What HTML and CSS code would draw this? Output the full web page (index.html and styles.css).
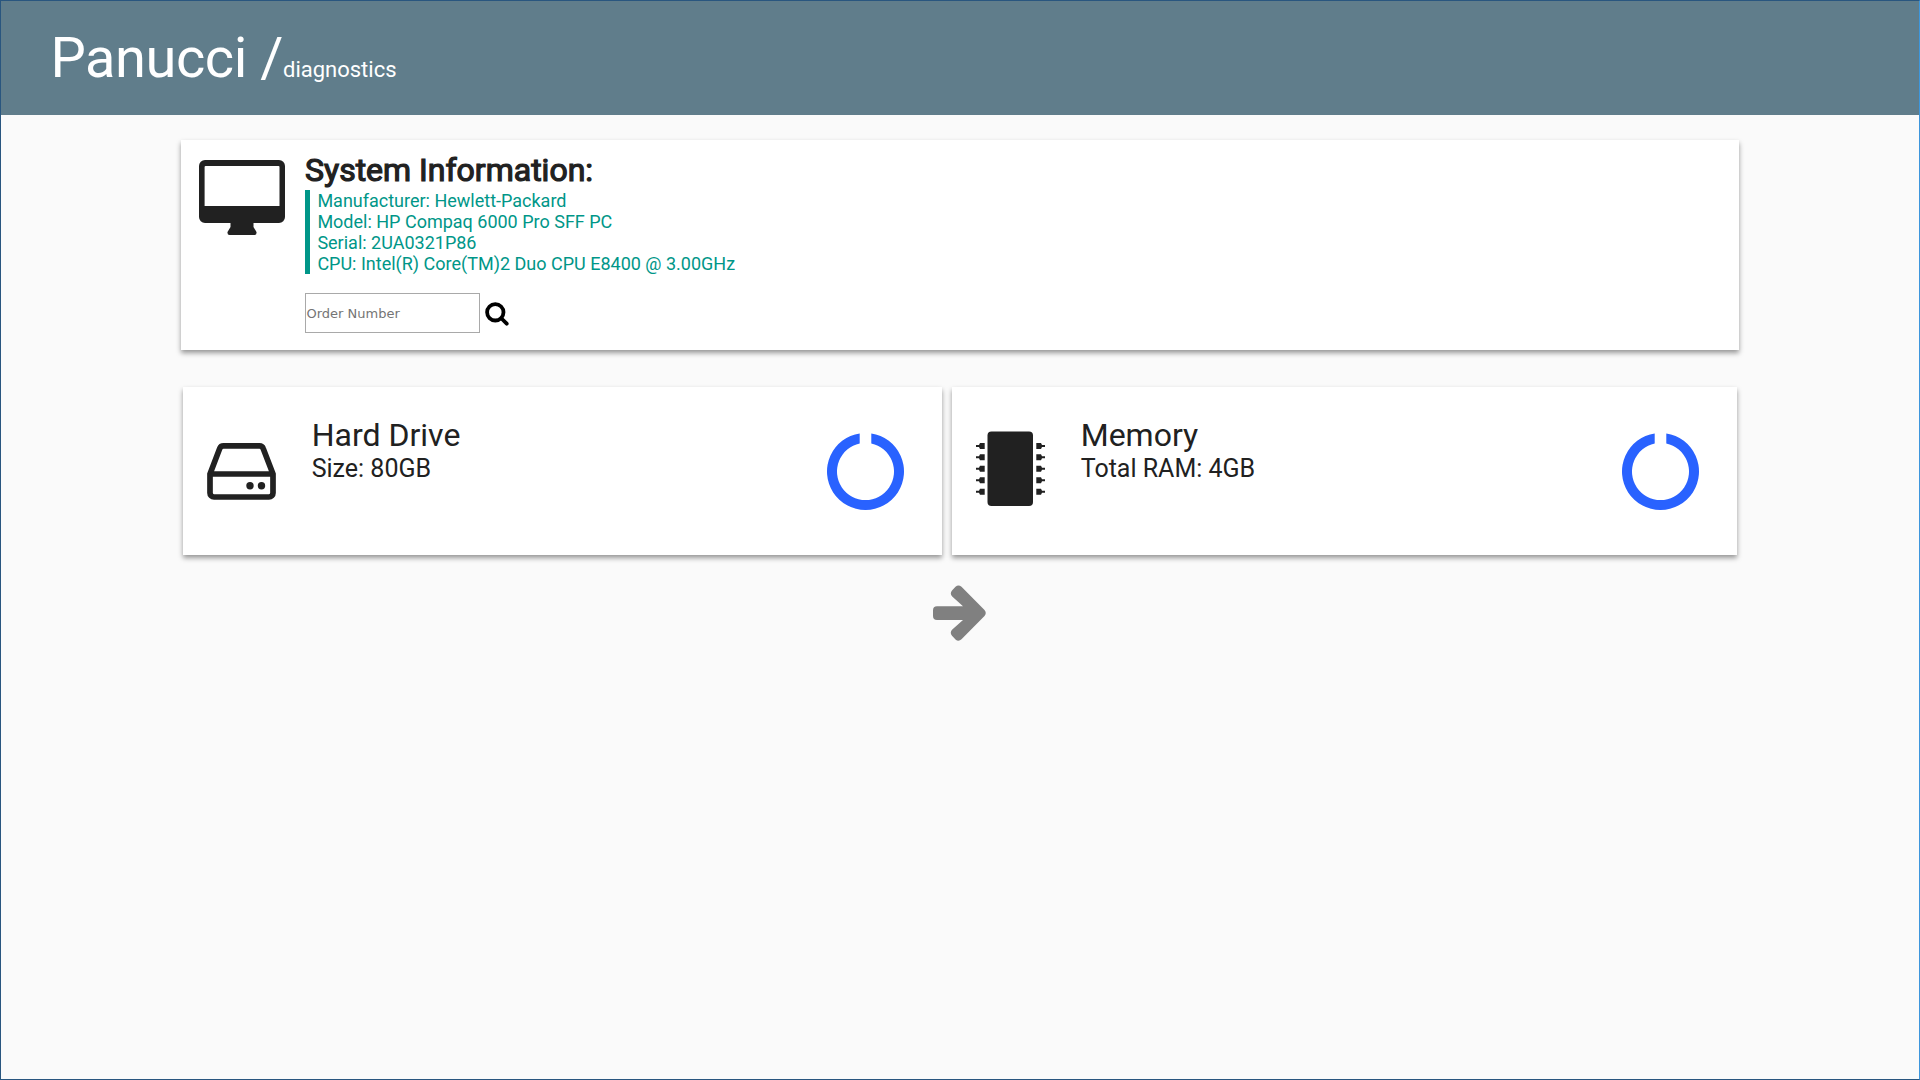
FILE: index.html
```html
<!DOCTYPE html>
<html lang="en">
<head>
<meta charset="utf-8">
<title>Panucci / diagnostics</title>
<link rel="stylesheet" href="styles.css">
</head>
<body>
<header class="toolbar">
  <h1 class="brand">Panucci /</h1><span class="section">diagnostics</span>
</header>
<main class="content">
  <section class="card system">
    <svg class="icon-desktop" viewBox="0 0 86 75"><path fill-rule="evenodd" d="M6 0H80a6 6 0 0 1 6 6V57a6 6 0 0 1-6 6H54.500v4L57.500 72q.4 3-2 3H30.500q-2.300 0-2-3l3-5V63H6a6 6 0 0 1-6-6V6a6 6 0 0 1 6-6ZM6.600 6a1 1 0 0 0-1 1V46H80.500V7a1 1 0 0 0-1-1Z"/></svg>
    <div class="system-body">
      <h2 class="system-title">System Information:</h2>
      <div class="facts">
        <div>Manufacturer: Hewlett-Packard</div>
        <div>Model: HP Compaq 6000 Pro SFF PC</div>
        <div>Serial: 2UA0321P86</div>
        <div>CPU: Intel(R) Core(TM)2 Duo CPU E8400 @ 3.00GHz</div>
      </div>
      <form class="order">
        <input class="order-input" type="text" placeholder="Order Number">
        <svg class="icon-search" viewBox="0 0 24 24"><circle cx="10.300" cy="10.300" r="8.200"/><path d="M16.500 16.500L21.700 21.700"/></svg>
      </form>
    </div>
  </section>
  <div class="devices">
    <section class="card device drive">
      <svg class="icon-drive" viewBox="0 0 69 57"><path d="M3 31L12.700 5.500Q13.700 2.900 16.500 2.900H52.500Q55.300 2.900 56.200 5.500L66 31V50a4 4 0 0 1-4 4H7a4 4 0 0 1-4-4ZM3 31H66"/><circle cx="43" cy="42.700" r="3.700"/><circle cx="54.500" cy="42.700" r="3.700"/></svg>
      <div class="device-body"><h3 class="device-title">Hard Drive</h3><div class="device-info">Size: 80GB</div></div>
      <svg class="ring" viewBox="0 0 77 77"><path d="M44.300 .44A38.500 38.500 0 1 1 32.700 .44V10.600A28.500 28.500 0 1 0 44.300 10.600Z"/></svg>
    </section>
    <section class="card device memory">
      <svg class="icon-chip" viewBox="0 0 69 75"><rect x="11.500" y=".4" width="45.500" height="74.600" rx="4"/><path id="pins" d="M0 13.300h3l1-2h4.700v6H4l-1-2H0ZM0 24.700h3l1-2h4.700v6H4l-1-2H0ZM0 36.200h3l1-2h4.700v6H4l-1-2H0ZM0 47.700h3l1-2h4.700v6H4l-1-2H0ZM0 59.100h3l1-2h4.700v6H4l-1-2H0Z" transform="translate(0 .6)"/><use href="#pins" transform="matrix(-1 0 0 1 69 0)"/></svg>
      <div class="device-body"><h3 class="device-title">Memory</h3><div class="device-info">Total RAM: 4GB</div></div>
      <svg class="ring" viewBox="0 0 77 77"><path d="M44.300 .44A38.500 38.500 0 1 1 32.700 .44V10.600A28.500 28.500 0 1 0 44.300 10.600Z"/></svg>
    </section>
  </div>
  <svg class="icon-next" viewBox="0 0 53 56"><path d="M4 21.300H30L19.200 11.500Q16.500 8.500 19 5.500L22.500 1.700Q25.500-.8 28.500 1.800L51.500 25Q54 28 51.500 31L28.500 54.300Q25.500 57 22.500 54.400L19 50.800Q16.500 47.800 19 44.700L30 35H4Q0 35 0 31V25.300Q0 21.300 4 21.300Z"/></svg>
</main>
</body>
</html>
```
FILE: styles.css
```css
* { box-sizing: border-box; margin: 0; padding: 0; }
svg { display: block; flex: none; }
body {
  height: 1080px;
  display: flex;
  flex-direction: column;
  background: #fafafa;
  border: 1px solid #29567f;
  border-right-color: #3d96dc;
  color: #212121;
  font-family: Roboto, sans-serif;
}
.toolbar {
  height: 114px;
  padding-left: 49.500px;
  display: flex;
  align-items: baseline;
  background: #607d8b;
  color: #fff;
}
.brand { font-size: 56px; font-weight: 400; line-height: 114px; letter-spacing: -.45px; }
.section { font-size: 22px; }
.content { display: flex; flex-direction: column; align-items: center; padding-top: 25px; }
.card { background: #fff; box-shadow: 0 3px 5px rgba(0, 0, 0, .4); }
.system { width: 1558px; height: 210px; display: flex; padding: 0 0 0 17.600px; }
.icon-desktop { width: 86px; height: 75px; margin-top: 20px; fill: #212121; }
.system-body { margin-left: 20.400px; padding-top: 11px; }
.system-title { font-size: 32px; line-height: 38px; font-weight: 400; -webkit-text-stroke: 1.200px #212121; margin-bottom: 1px; }
.facts { border-left: 5px solid #009688; padding-left: 7.400px; color: #009688; font-size: 18px; line-height: 21px; }
.order { display: flex; align-items: center; margin-top: 19px; }
.order-input { width: 175px; height: 40px; border: 1px solid #a9a9a9; padding: 0 .5px; font: 13px "DejaVu Sans", sans-serif; }
.order-input::placeholder { color: #757575; }
.icon-search { width: 24px; height: 24px; margin-left: 5px; margin-top: 2px; fill: none; stroke: #000; stroke-width: 3.800; stroke-linecap: round; }
.devices { width: 1554px; display: flex; gap: 10px; margin-top: 37px; }
.device { height: 168px; display: flex; }
.drive { width: 759px; padding: 0 38px 0 24px; }
.memory { width: 785px; padding: 0 38px 0 24px; }
.icon-drive { width: 69px; height: 57px; margin-top: 56px; fill: none; stroke: #212121; stroke-width: 5.700; }
.icon-drive circle { fill: #212121; stroke: none; }
.icon-chip { width: 69px; height: 75px; margin-top: 44px; fill: #212121; }
.device-body { flex: 1; padding: 29px 0 0 35.700px; }
.device-title { font-size: 32px; font-weight: 400; line-height: 38px; }
.device-info { font-size: 25px; line-height: 29px; }
.ring { width: 77px; height: 77px; margin: 45.800px -.2px 0 0; fill: #2962ff; }
.icon-next { width: 53px; height: 56px; margin: 30px 2px 0 0; fill: #808080; }
```
